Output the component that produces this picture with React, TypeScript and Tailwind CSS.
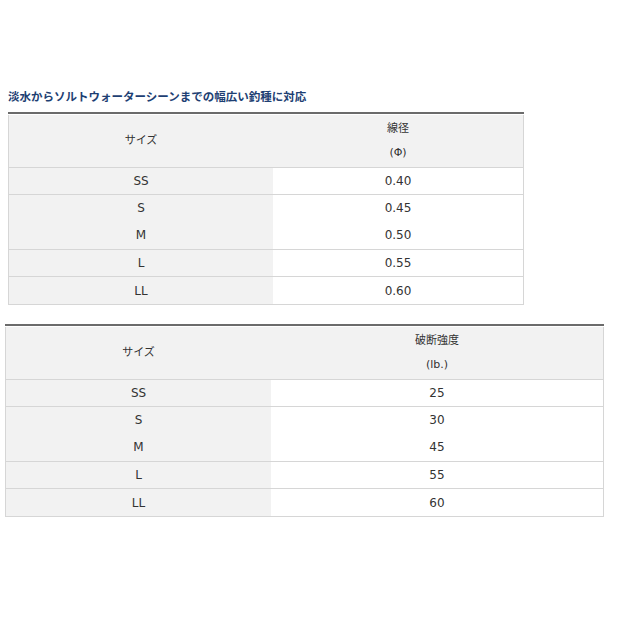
const font = { fontFamily: '"DejaVu Sans", "Noto Sans CJK JP", sans-serif' };

type Spec = {
  heading: string;
  unit: string;
  values: string[];
};

const sizes = ["SS", "S", "M", "L", "LL"];

function SpecTable({ spec, className, col }: { spec: Spec; className: string; col: string }) {
  return (
    <div className={className}>
      <div className="border-t-2 border-[#6b6b6b] pt-px">
        <div className="border border-t-0 border-[#d6d6d6] text-[#333]">
          <div className="flex h-[52px] bg-[#f2f2f2]">
            <div className={`${col} flex items-center justify-center text-[11px]`}>サイズ</div>
            <div className="flex flex-1 flex-col items-center justify-center text-[11px] leading-[24px]">
              <span>{spec.heading}</span>
              <span>{spec.unit}</span>
            </div>
          </div>
          {sizes.map((s, i) => (
            <div
              key={s}
              className={`flex text-[12px] ${i === 2 || i === 4 ? "h-[28px]" : "h-[27px]"} ${
                i === 2 ? "" : "border-t border-[#d6d6d6]"
              }`}
            >
              <div className={`${col} flex items-center justify-center bg-[#f2f2f2]`}>{s}</div>
              <div className="flex flex-1 items-center justify-center bg-white">{spec.values[i]}</div>
            </div>
          ))}
        </div>
      </div>
    </div>
  );
}

export default function App() {
  return (
    <div className="h-[620px] w-[620px] bg-white" style={font}>
      <div className="pt-[89px]">
        <h2 className="ml-[8px] text-[11.5px] font-bold leading-[16px] text-[#1e3f73]">
          淡水からソルトウォーターシーンまでの幅広い釣種に対応
        </h2>
        <SpecTable
          className="ml-[8px] mt-[7px] w-[516px]"
          col="w-[264px]"
          spec={{ heading: "線径", unit: "(Φ)", values: ["0.40", "0.45", "0.50", "0.55", "0.60"] }}
        />
        <SpecTable
          className="ml-[5px] mt-[19px] w-[599px]"
          col="w-[265px]"
          spec={{ heading: "破断強度", unit: "(lb.)", values: ["25", "30", "45", "55", "60"] }}
        />
      </div>
    </div>
  );
}
